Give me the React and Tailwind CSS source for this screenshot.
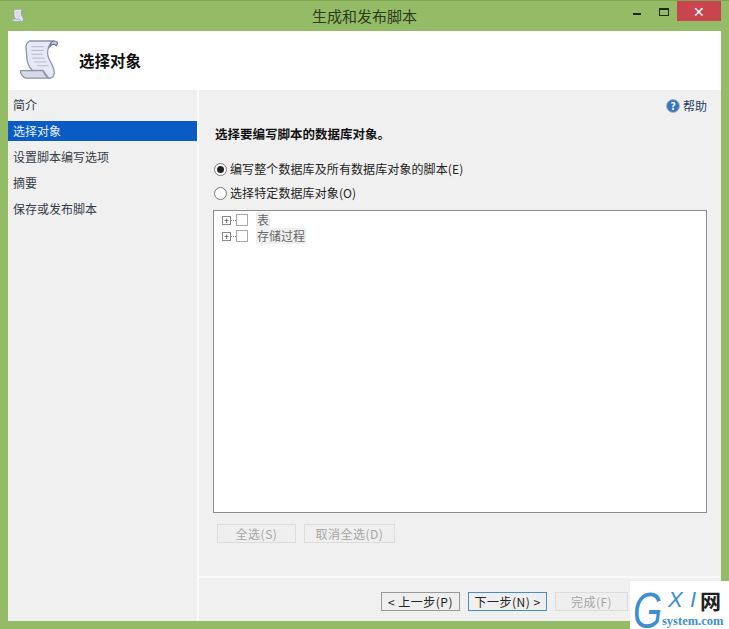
const cjk = "font-['SimSun','Noto_Sans_CJK_SC',sans-serif]";

function ScrollIcon({ className }) {
  return (
    <svg viewBox="0 0 42 44" className={className}>
      <path
        d="M10 1 H35 C32 3 29 8 29 14 C29 21 36 26 36 34 C36 38 34 40 30 40 L24 32 H13 C9 28 7 22 7 16 C7 11 4 5 10 1 Z"
        fill="#e6e8f4"
        stroke="#8f93ab"
        strokeWidth="1.4"
      />
      <path d="M33 2 C35 1 38 1 39 2 C40 4 39 5 38 6 C36 3 32 5 31 8 Z" fill="#c9cde0" stroke="#6f7390" strokeWidth="1.2" />
      <path d="M0 32 H24 C25 35 27 38 30 40 H7 C3 40 1 36 0 32 Z" fill="#d6d9ea" stroke="#8f93ab" strokeWidth="1.3" />
      <path d="M12 7 H25 M12 11 H25 M12 15 H24 M13 19 H26 M15 23 H28 M18 27 H30" stroke="#b4b8cc" strokeWidth="1" fill="none" />
    </svg>
  );
}

function NavItem({ label, active }) {
  return (
    <div
      className={
        "h-[20px] mb-[6px] pl-[5px] text-[12px] leading-[20px] " +
        (active ? "bg-[#0a5bc4] text-[#e8f0fa]" : "text-[#333b45]")
      }
    >
      {label}
    </div>
  );
}

function Radio({ checked, label }) {
  return (
    <div className="flex items-center h-[16px] gap-[3px] text-[12px] tracking-[0.1px] text-[#222]">
      <span className="w-[13px] h-[13px] rounded-full border border-[#777] bg-white flex items-center justify-center">
        {checked && <span className="w-[7px] h-[7px] rounded-full bg-[#222]" />}
      </span>
      <span>{label}</span>
    </div>
  );
}

function TreeRow({ label }) {
  return (
    <div className="flex items-center h-[16px]">
      <span className="w-[9px] h-[9px] border border-[#8a8a8a] bg-white flex items-center justify-center text-[9px] leading-none text-[#333]">
        +
      </span>
      <span className="w-[5px] border-t border-dotted border-[#888]" />
      <span className="w-[12px] h-[12px] border border-[#a8a8a8] bg-white" />
      <span className="ml-[8px] px-[1px] text-[12px] leading-[16px] text-[#666] bg-[#f0f0f0]">{label}</span>
    </div>
  );
}

function Btn({ children, w, variant }) {
  const styles = {
    normal: "border-[#999] text-[#222]",
    primary: "border-[#4a8dc0] text-[#222]",
    disabled: "border-[#dcdcdc] text-[#a5a5a5]",
  };
  return (
    <div
      className={
        "h-[19px] border bg-[#efefef] flex items-center justify-center text-[12px] tracking-[0.5px] leading-none " +
        w + " " + styles[variant]
      }
    >
      {children}
    </div>
  );
}

export default function App() {
  return (
    <div className={"relative w-[729px] h-[629px] overflow-hidden bg-[#94bb66] flex flex-col " + cjk}>
      {/* title bar */}
      <div className="relative h-[31px] shrink-0 flex items-center justify-center border-t border-[#7ea553]">
        <ScrollIcon className="absolute left-[12px] top-[8px] w-[13px] h-[14px]" />
        <span className="text-[15px] text-[#2c3a1c]">生成和发布脚本</span>
        <div className="absolute left-[633px] top-[12px] w-[8px] h-[2px] bg-[#1c2a10]" />
        <div className="absolute left-[659px] top-[7px] w-[10px] h-[8px] border border-[#1c2a10] border-t-2" />
        <div className="absolute left-[677px] top-0 w-[44px] h-[20px] bg-[#c9444f] flex items-center justify-center text-[14px] leading-none text-white">
          ✕
        </div>
      </div>

      <div className="ml-[8px] mr-[8px] h-[590px] flex flex-col bg-[#f0f0f0]">
        {/* header */}
        <div className="h-[59px] shrink-0 bg-white flex items-center">
          <ScrollIcon className="ml-[12px] w-[40px] h-[42px]" />
          <span className="ml-[19px] text-[15.5px] font-bold text-[#111]">选择对象</span>
        </div>

        <div className="flex-1 flex">
          {/* sidebar */}
          <div className="w-[189px] shrink-0 pt-[5px]">
            <NavItem label="简介" />
            <NavItem label="选择对象" active />
            <NavItem label="设置脚本编写选项" />
            <NavItem label="摘要" />
            <NavItem label="保存或发布脚本" />
          </div>
          <div className="w-[2px] shrink-0 bg-[#fafafa]" />

          {/* main */}
          <div className="flex-1 flex flex-col">
            <div className="flex-1 pl-[14px] pr-[14px]">
              <div className="h-[30px] flex items-center justify-end gap-[3px] pt-[2px]">
                <span className="w-[14px] h-[14px] rounded-full bg-[#3b76b8] border border-[#9dbbdc] flex items-center justify-center text-[10px] font-bold leading-none text-white">
                  ?
                </span>
                <span className="text-[12px] text-[#1d3c63]">帮助</span>
              </div>
              <div className="mt-[6px] h-[16px] pl-[2px] text-[12.5px] leading-[16px] font-bold text-[#111]">
                选择要编写脚本的数据库对象。
              </div>
              <div className="mt-[19px] pl-[1px] flex flex-col gap-[8px]">
                <Radio checked label="编写整个数据库及所有数据库对象的脚本(E)" />
                <Radio label="选择特定数据库对象(O)" />
              </div>
              <div className="mt-[9px] h-[303px] border border-[#8c8c8c] bg-white pl-[8px] pt-[1px]">
                <TreeRow label="表" />
                <TreeRow label="存储过程" />
              </div>
              <div className="mt-[11px] ml-[4px] flex gap-[8px]">
                <Btn w="w-[79px]" variant="disabled">全选(S)</Btn>
                <Btn w="w-[91px]" variant="disabled">取消全选(D)</Btn>
              </div>
            </div>

            {/* footer */}
            <div className="h-[45px] shrink-0 border-t-2 border-[#fafafa] flex justify-end gap-[8px] pt-[14px] pr-[93px]">
              <Btn w="w-[79px]" variant="normal">&lt; 上一步(P)</Btn>
              <Btn w="w-[79px]" variant="primary">下一步(N) &gt;</Btn>
              <Btn w="w-[73px]" variant="disabled">完成(F)</Btn>
            </div>
          </div>
        </div>
      </div>

      {/* watermark */}
      <div className="absolute left-[630px] top-[581px] w-[99px] h-[48px] bg-white overflow-hidden">
        <span className="absolute left-[3px] top-[12px] origin-left scale-x-75 font-['Liberation_Sans',sans-serif] italic text-[50px] leading-[36px] text-[#3d8fd0]">G</span>
        <span className="absolute left-[38px] top-[10px] font-['Liberation_Sans',sans-serif] italic text-[22px] leading-[18px] text-[#3d8fd0]">X</span>
        <span className="absolute left-[60px] top-[10px] font-['Liberation_Sans',sans-serif] italic text-[22px] leading-[18px] text-[#3d8fd0]">I</span>
        <span className="absolute left-[70px] top-[8px] text-[21px] leading-[22px] font-bold text-[#222]">网</span>
        <span className="absolute left-[32px] top-[33px] font-['Liberation_Serif',serif] font-bold text-[12.5px] leading-[14px] text-[#3d8fd0]">system.com</span>
      </div>
    </div>
  );
}
